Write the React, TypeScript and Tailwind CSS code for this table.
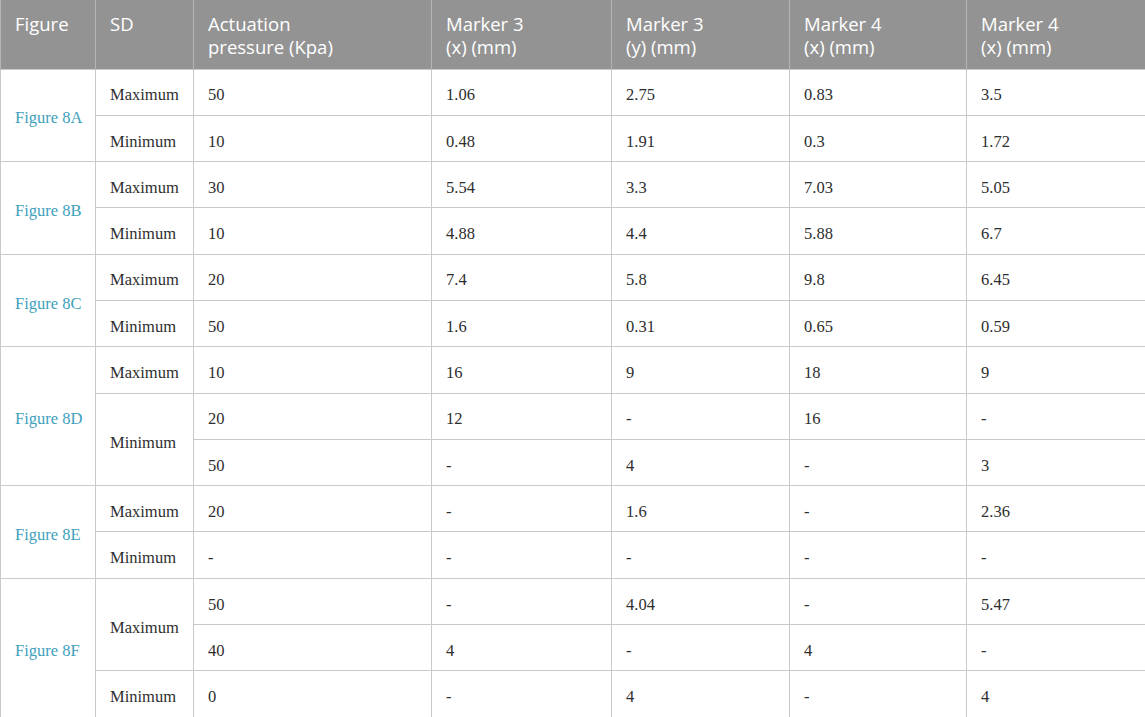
import React from "react";

type Cell = { text: string; rowSpan?: number };
type Row = { fig?: Cell; sd?: Cell; vals: string[] };

const rows: Row[] = [
  { fig: { text: "Figure 8A", rowSpan: 2 }, sd: { text: "Maximum" }, vals: ["50", "1.06", "2.75", "0.83", "3.5"] },
  { sd: { text: "Minimum" }, vals: ["10", "0.48", "1.91", "0.3", "1.72"] },
  { fig: { text: "Figure 8B", rowSpan: 2 }, sd: { text: "Maximum" }, vals: ["30", "5.54", "3.3", "7.03", "5.05"] },
  { sd: { text: "Minimum" }, vals: ["10", "4.88", "4.4", "5.88", "6.7"] },
  { fig: { text: "Figure 8C", rowSpan: 2 }, sd: { text: "Maximum" }, vals: ["20", "7.4", "5.8", "9.8", "6.45"] },
  { sd: { text: "Minimum" }, vals: ["50", "1.6", "0.31", "0.65", "0.59"] },
  { fig: { text: "Figure 8D", rowSpan: 3 }, sd: { text: "Maximum" }, vals: ["10", "16", "9", "18", "9"] },
  { sd: { text: "Minimum", rowSpan: 2 }, vals: ["20", "12", "-", "16", "-"] },
  { vals: ["50", "-", "4", "-", "3"] },
  { fig: { text: "Figure 8E", rowSpan: 2 }, sd: { text: "Maximum" }, vals: ["20", "-", "1.6", "-", "2.36"] },
  { sd: { text: "Minimum" }, vals: ["-", "-", "-", "-", "-"] },
  { fig: { text: "Figure 8F", rowSpan: 3 }, sd: { text: "Maximum", rowSpan: 2 }, vals: ["50", "-", "4.04", "-", "5.47"] },
  { vals: ["40", "4", "-", "4", "-"] },
  { sd: { text: "Minimum" }, vals: ["0", "-", "4", "-", "4"] },
];

const headers = [
  ["Figure"],
  ["SD"],
  ["Actuation", "pressure (Kpa)"],
  ["Marker 3", "(x) (mm)"],
  ["Marker 3", "(y) (mm)"],
  ["Marker 4", "(x) (mm)"],
  ["Marker 4", "(x) (mm)"],
];

const widths = ["w-[95px]", "w-[98px]", "w-[238px]", "w-[180px]", "w-[178px]", "w-[177px]", "w-[179px]"];

const td = "border border-[#c9c9c9] px-[14px] pt-[7px] align-middle whitespace-nowrap";

export default function App() {
  return (
    <div className="w-[1145px] h-[717px] overflow-hidden bg-white">
      <table className="w-[1145px] table-fixed border-collapse">
        <colgroup>
          {widths.map((w, i) => (
            <col key={i} className={w} />
          ))}
        </colgroup>
        <thead>
          <tr className="h-[69px] bg-[#939393]">
            {headers.map((h, i) => (
              <th
                key={i}
                className="border-x border-[#b4b4b4] px-[14px] pt-[12px] align-top text-left font-normal text-white text-[18.5px] leading-[23px] font-['Open_Sans',sans-serif]"
              >
                {h.map((line, j) => (
                  <div key={j}>{line}</div>
                ))}
              </th>
            ))}
          </tr>
        </thead>
        <tbody className="font-['Liberation_Serif',serif] text-[16.5px] text-[#2e2e2e]">
          {rows.map((r, i) => (
            <tr key={i} className="h-[46.3px]">
              {r.fig && (
                <td rowSpan={r.fig.rowSpan} className={`${td} text-[#3e9fbd]`}>
                  {r.fig.text}
                </td>
              )}
              {r.sd && (
                <td rowSpan={r.sd.rowSpan} className={td}>
                  {r.sd.text}
                </td>
              )}
              {r.vals.map((v, j) => (
                <td key={j} className={td}>
                  {v}
                </td>
              ))}
            </tr>
          ))}
        </tbody>
      </table>
    </div>
  );
}
